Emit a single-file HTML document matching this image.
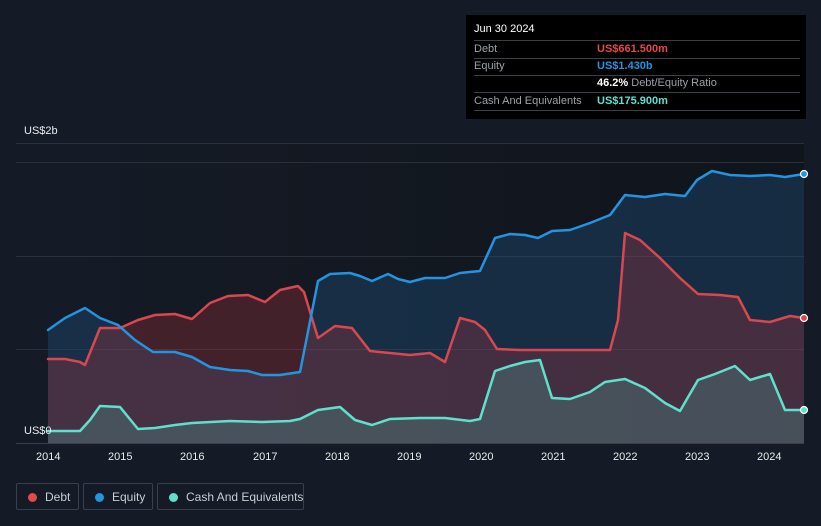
<!DOCTYPE html>
<html><head><style>
html,body{margin:0;width:821px;height:526px;overflow:hidden}
body{background:#151b26;font-family:"Liberation Sans",sans-serif;position:relative}
.tt{position:absolute;left:466px;top:15px;width:340px;height:104px;background:#000;color:#fff;font-size:11px}
.tt .r{position:absolute;left:8px;right:6px;height:17px;line-height:17px;border-bottom:1px solid #3a3f47}
.tt .l{position:absolute;left:0;color:#9aa0a8}
.tt .v{position:absolute;left:123px;font-weight:bold;white-space:nowrap}
.lg{position:absolute;top:483px;height:27px;border:1px solid #3a404a;border-radius:2px;color:#c8ccd2;font-size:12px;line-height:26px;box-sizing:border-box;white-space:nowrap}
.lg i{position:absolute;left:11px;top:9px;width:9px;height:9px;border-radius:50%}
.lg span{position:absolute;left:28px}
.ax{position:absolute;color:#e8eaed;font-size:11px}
</style></head><body>
<svg width="821" height="526" style="position:absolute;left:0;top:0">
<defs><linearGradient id="bg" x1="0" x2="1"><stop offset="0" stop-color="#151b26"/><stop offset="1" stop-color="#10141b"/></linearGradient></defs>
<rect x="48" y="143" width="756" height="300" fill="url(#bg)"/>
<g stroke="#2a303a" stroke-width="1">
<line x1="16" y1="143.5" x2="804" y2="143.5"/><line x1="16" y1="162.5" x2="804" y2="162.5"/>
<line x1="16" y1="256.5" x2="804" y2="256.5"/><line x1="16" y1="349.5" x2="804" y2="349.5"/>
<line x1="16" y1="443.5" x2="804" y2="443.5" stroke="#3a404a"/>
</g>
<polygon fill="#1c4a72" fill-opacity="0.45" points="48,443 48,330 65,318 85,308 100,318 118,325 135,340 153,352 175,352 192,357 210,367 230,370 248,371 262,375 280,375 300,372 318,281 330,274 350,273 360,276 372,281 388,274 398,279 410,282 425,278 445,278 460,273 480,271 495,238 510,234 525,235 538,238 552,231 570,230 590,223 610,215 625,195 645,197 665,194 685,196 697,180 712,171 730,175 750,176 770,175 785,177 804,174 804,443"/>
<polygon fill="#c0353d" fill-opacity="0.28" points="48,443 48,359 65,359 80,362 85,365 100,328 120,328 138,320 155,315 175,314 192,319 210,303 228,296 248,295 265,302 280,290 298,286 304,292 318,338 335,326 352,328 370,351 390,353 410,355 430,353 445,362 460,318 475,322 485,330 497,349 520,350 560,350 610,350 618,320 625,233 640,240 660,258 680,278 698,294 720,295 738,297 750,320 770,322 790,316 804,318 804,443"/>
<polygon fill="#4fb8a8" fill-opacity="0.25" points="48,443 48,431 80,431 90,420 100,406 120,407 138,429 155,428 175,425 192,423 230,421 262,422 290,421 300,419 318,410 340,407 355,420 372,425 390,419 420,418 445,418 470,421 480,419 495,371 510,366 525,362 540,360 552,398 570,399 590,392 605,382 625,379 645,388 665,403 680,411 698,380 715,374 735,366 750,380 770,374 785,410 804,410 804,443"/>
<g fill="none" stroke-width="2.5" stroke-linejoin="round" stroke-linecap="round">
<polyline stroke="#d9474f" points="48,359 65,359 80,362 85,365 100,328 120,328 138,320 155,315 175,314 192,319 210,303 228,296 248,295 265,302 280,290 298,286 304,292 318,338 335,326 352,328 370,351 390,353 410,355 430,353 445,362 460,318 475,322 485,330 497,349 520,350 560,350 610,350 618,320 625,233 640,240 660,258 680,278 698,294 720,295 738,297 750,320 770,322 790,316 804,318"/>
<polyline stroke="#2394e0" points="48,330 65,318 85,308 100,318 118,325 135,340 153,352 175,352 192,357 210,367 230,370 248,371 262,375 280,375 300,372 318,281 330,274 350,273 360,276 372,281 388,274 398,279 410,282 425,278 445,278 460,273 480,271 495,238 510,234 525,235 538,238 552,231 570,230 590,223 610,215 625,195 645,197 665,194 685,196 697,180 712,171 730,175 750,176 770,175 785,177 804,174"/>
<polyline stroke="#5fe0cc" points="48,431 80,431 90,420 100,406 120,407 138,429 155,428 175,425 192,423 230,421 262,422 290,421 300,419 318,410 340,407 355,420 372,425 390,419 420,418 445,418 470,421 480,419 495,371 510,366 525,362 540,360 552,398 570,399 590,392 605,382 625,379 645,388 665,403 680,411 698,380 715,374 735,366 750,380 770,374 785,410 804,410"/>
</g>
<g stroke="#fff" stroke-width="1.2">
<circle cx="804" cy="174" r="3.5" fill="#2394e0"/><circle cx="804" cy="318" r="3.5" fill="#d9474f"/><circle cx="804" cy="410" r="3.5" fill="#5fe0cc"/>
</g>
</svg>
<div class="ax" style="left:24px;top:125px">US$2b</div>
<div class="ax" style="left:24px;top:425px">US$0</div>
<div class="ax" style="left:36px;top:451px">2014</div><div class="ax" style="left:108px;top:451px">2015</div>
<div class="ax" style="left:180px;top:451px">2016</div><div class="ax" style="left:253px;top:451px">2017</div>
<div class="ax" style="left:325px;top:451px">2018</div><div class="ax" style="left:397px;top:451px">2019</div>
<div class="ax" style="left:469px;top:451px">2020</div><div class="ax" style="left:541px;top:451px">2021</div>
<div class="ax" style="left:613px;top:451px">2022</div><div class="ax" style="left:685px;top:451px">2023</div>
<div class="ax" style="left:757px;top:451px">2024</div>
<div class="tt">
<div style="position:absolute;left:8px;top:8px">Jun 30 2024</div>
<div class="r" style="top:25px;border-top:1px solid #3a3f47"><span class="l">Debt</span><span class="v" style="color:#e5484d">US$661.500m</span></div>
<div class="r" style="top:43px"><span class="l">Equity</span><span class="v" style="color:#2394e0">US$1.430b</span></div>
<div class="r" style="top:60px;border:none"><span class="v" style="color:#fff">46.2% <span style="font-weight:normal;color:#9aa0a8">Debt/Equity Ratio</span></span></div>
<div class="r" style="top:77px;border-top:1px solid #3a3f47"><span class="l">Cash And Equivalents</span><span class="v" style="color:#5fe0cc">US$175.900m</span></div>
</div>
<div class="lg" style="left:16px;width:63px"><i style="background:#e5484d"></i><span>Debt</span></div>
<div class="lg" style="left:83px;width:70px"><i style="background:#2394e0"></i><span>Equity</span></div>
<div class="lg" style="left:157px;width:147px"><i style="background:#5fe0cc"></i><span>Cash And Equivalents</span></div>
</body></html>
